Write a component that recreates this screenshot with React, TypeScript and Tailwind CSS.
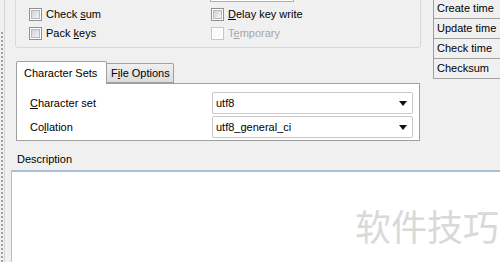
import React from "react";

function Check({ disabled }: { disabled?: boolean }) {
  return disabled ? (
    <div className="w-[13px] h-[13px] shrink-0 border border-[#c5c5c5] bg-white p-[1px]">
      <div className="w-full h-full bg-[#fafafa]" />
    </div>
  ) : (
    <div className="w-[13px] h-[13px] shrink-0 border border-[#8e8f8f] bg-white p-[1px]">
      <div className="w-full h-full border border-[#b5b8bc] bg-[linear-gradient(135deg,#cfd2d6,#f4f4f4)]" />
    </div>
  );
}

function Select({ value }: { value: string }) {
  return (
    <div className="w-[201px] h-[22px] border border-[#c9c9c9] rounded-[2px] bg-white flex items-center pl-[3px] pr-[5px]">
      <span className="flex-1">{value}</span>
      <svg width="8" height="5" viewBox="0 0 8 5">
        <polygon points="0,0 8,0 4,5" fill="#111" />
      </svg>
    </div>
  );
}

export default function App() {
  return (
    <div className="w-[500px] h-[262px] overflow-hidden relative bg-[#f0f0f0] font-['Liberation_Sans',Arial,sans-serif] text-[11px] leading-[13px] text-black flex">
      {/* gutter */}
      <div className="w-[11px] shrink-0 flex h-full">
        <div className="w-[4px] h-full pt-[32px] pl-[1px]">
          <div className="h-full border-l-2 border-dotted border-[#a0a0a0]" />
        </div>
        <div className="w-px h-full bg-[#d4d4d4]" />
      </div>

      <div className="flex-1 flex flex-col min-w-0">
        <div className="flex items-start">
          {/* left column */}
          <div className="w-[410px] pl-[4px] flex flex-col shrink-0">
            {/* group box */}
            <div className="-mt-[8px] h-[56px] w-[406px] border border-[#d5d9dd] rounded-[3px] flex flex-col">
              <div className="ml-[194px] flex items-start">
                <div className="w-[84px] h-[9px] border border-t-0 border-[#abadb3] bg-white" />
                <div className="w-[16px] h-[3px] bg-[#e3e3e3]" />
              </div>
              <div className="mt-[6px] pl-[13px] grid grid-cols-[182px_1fr] gap-y-[6px]">
                <div className="flex items-center gap-[4px] h-[13px]">
                  <Check />
                  <span>
                    Check <span className="underline">s</span>um
                  </span>
                </div>
                <div className="flex items-center gap-[4px] h-[13px]">
                  <Check />
                  <span>
                    <span className="underline">D</span>elay key write
                  </span>
                </div>
                <div className="flex items-center gap-[4px] h-[13px]">
                  <Check />
                  <span>
                    Pack <span className="underline">k</span>eys
                  </span>
                </div>
                <div className="flex items-center gap-[4px] h-[13px]">
                  <Check disabled />
                  <span className="text-[#a7a7a7]">
                    T<span className="underline">e</span>mporary
                  </span>
                </div>
              </div>
            </div>

            {/* tabs */}
            <div className="mt-[13px] ml-[1px] flex items-end h-[22px]">
              <div className="relative z-10 w-[91px] h-[23px] -mb-[1px] border border-b-0 border-[#a0a0a0] bg-white pl-[7px] flex items-center rounded-t-[2px]">
                Character Sets
              </div>
              <div className="w-[67px] h-[20px] border border-l-0 border-[#a0a0a0] bg-[linear-gradient(#f0f0f0,#dcdcdc)] pl-[4px] flex items-center rounded-tr-[2px]">
                F<span className="underline">i</span>le Options
              </div>
            </div>
            <div className="ml-[1px] w-[404px] h-[58px] border border-[#a0a0a0] bg-white pt-[8px] pl-[13px] flex flex-col gap-[2px]">
              <div className="flex items-center">
                <span className="w-[182px]">
                  <span className="underline">C</span>haracter set
                </span>
                <Select value="utf8" />
              </div>
              <div className="flex items-center">
                <span className="w-[182px]">
                  Co<span className="underline">l</span>lation
                </span>
                <Select value="utf8_general_ci" />
              </div>
            </div>
          </div>

          {/* right column */}
          <div className="ml-[12px] w-[67px] -mt-[1px] flex flex-col shrink-0">
            {["Create time", "Update time", "Check time", "Checksum"].map((t) => (
              <div
                key={t}
                className="h-[20px] border-l border-b border-[#a0a0a0] bg-[#f0f0f0] pl-[3px] flex items-center whitespace-nowrap"
              >
                {t}
              </div>
            ))}
          </div>
        </div>

        <div className="mt-[12px] pl-[6px]">Description</div>
        <div className="mt-[4px] flex-1 border-t-2 border-l border-[#a9bfd6] bg-white" />
      </div>

      <div className="absolute left-[355px] top-[207px] text-[36px] leading-none text-[#d9d9d9] font-['Noto_Sans_CJK_SC',sans-serif] whitespace-nowrap">
        软件技巧
      </div>
    </div>
  );
}
